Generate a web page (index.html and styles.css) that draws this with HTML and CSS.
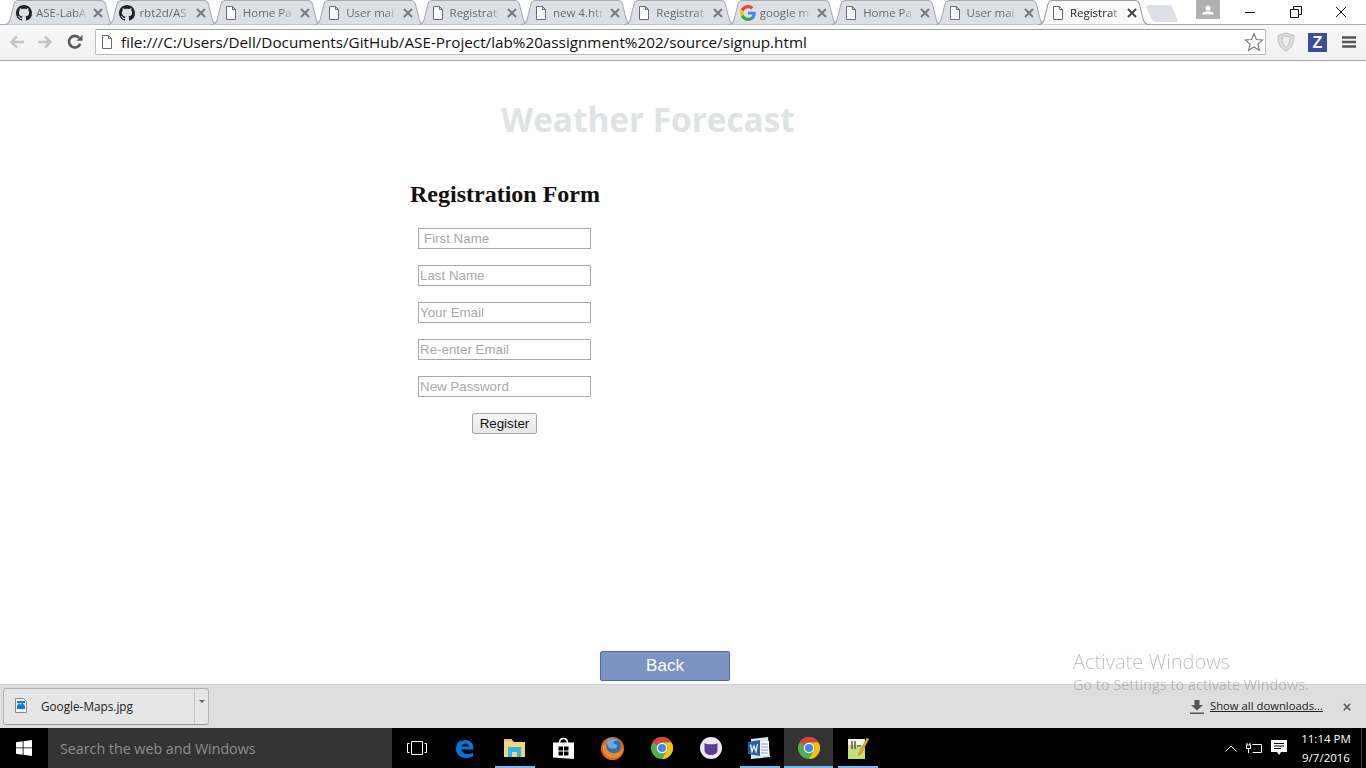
FILE: index.html
```html
<!DOCTYPE html>
<html lang="en">
<head>
<meta charset="utf-8">
<title>Registration</title>
<link rel="stylesheet" href="styles.css">
</head>
<body>
<svg class="defs" width="0" height="0" aria-hidden="true">
  <symbol id="tabshape" viewBox="0 0 111 25" preserveAspectRatio="none">
    <path d="M0.5 24.5C4 24.5 5 23 6 20L10 4C10.7 1.7 12 .5 14.5 .5H96.5C99 .5 100.3 1.7 101 4L105 20C106 23 107 24.5 110.5 24.5"/>
  </symbol>
  <symbol id="cross" viewBox="0 0 10 10"><path d="M1 1L9 9M9 1L1 9" fill="none" stroke="currentColor" stroke-width="2"/></symbol>
  <symbol id="github" viewBox="0 0 16 16"><path d="M8 0C3.58 0 0 3.58 0 8c0 3.54 2.29 6.53 5.47 7.59.4.07.55-.17.55-.38 0-.19-.01-.82-.01-1.49-2.01.37-2.53-.49-2.69-.94-.09-.23-.48-.94-.82-1.13-.28-.15-.68-.52-.01-.53.63-.01 1.08.58 1.23.82.72 1.21 1.87.87 2.33.66.07-.52.28-.87.51-1.07-1.78-.2-3.64-.89-3.64-3.95 0-.87.31-1.59.82-2.15-.08-.2-.36-1.02.08-2.12 0 0 .67-.21 2.2.82.64-.18 1.32-.27 2-.27.68 0 1.36.09 2 .27 1.53-1.04 2.2-.82 2.2-.82.44 1.1.16 1.92.08 2.12.51.56.82 1.27.82 2.15 0 3.07-1.87 3.75-3.65 3.95.29.25.54.73.54 1.48 0 1.07-.01 1.93-.01 2.2 0 .21.15.46.55.38A8.013 8.013 0 0016 8c0-4.42-3.58-8-8-8z"/></symbol>
  <symbol id="doc" viewBox="0 0 16 16"><path d="M3.500 1.500H9.500L12.500 4.500V14.500H3.500ZM9.500 1.500V4.500H12.500" fill="#fff" stroke="#6b6b6b" stroke-width="1"/></symbol>
  <symbol id="gee" viewBox="0 0 16 16">
    <path d="M15.700 8.200c0-.6-.05-1-.15-1.500H8v2.900h4.400c-.1.8-.6 1.900-1.700 2.700l2.600 2c1.600-1.400 2.400-3.600 2.400-6.100z" fill="#4285f4"/>
    <path d="M8 16c2.200 0 4-.7 5.300-2l-2.600-2c-.7.5-1.600.8-2.700.8-2.100 0-3.900-1.400-4.500-3.300L.8 11.500C2.100 14.200 4.800 16 8 16z" fill="#34a853"/>
    <path d="M3.500 9.500C3.300 9 3.200 8.500 3.200 8s.1-1 .3-1.500L.8 4.500C.3 5.500 0 6.700 0 8s.3 2.500.8 3.500z" fill="#fbbc05"/>
    <path d="M8 3.200c1.500 0 2.500.6 3.100 1.200l2.300-2.300C12 .8 10.200 0 8 0 4.800 0 2.100 1.800.8 4.500l2.700 2C4.100 4.600 5.900 3.200 8 3.200z" fill="#ea4335"/>
  </symbol>
  <symbol id="chrome" viewBox="0 0 22 22">
    <circle cx="11" cy="11" r="11" fill="#4caf50"/>
    <path d="M11 0A11 11 0 0 1 20.530 5.500H11A5.500 5.500 0 0 0 6.200 8.300L1.500 5.400A11 11 0 0 1 11 0Z" fill="#db4437"/>
    <path d="M20.530 5.500A11 11 0 0 1 11 22L15.800 13.700A5.500 5.500 0 0 0 15.800 8.300 5.500 5.500 0 0 0 11 5.500Z" fill="#f4c20d"/>
    <circle cx="11" cy="11" r="5.200" fill="#fff"/>
    <circle cx="11" cy="11" r="4.100" fill="#4a86e8"/>
  </symbol>
</svg>

<div class="strip">
  <div class="tabs">
    <div class="tab"><svg class="shape"><use href="#tabshape"/></svg><svg class="favicon"><use href="#github"/></svg><span class="title">ASE-LabA</span><svg class="x"><use href="#cross"/></svg></div>
    <div class="tab"><svg class="shape"><use href="#tabshape"/></svg><svg class="favicon"><use href="#github"/></svg><span class="title">rbt2d/AS</span><svg class="x"><use href="#cross"/></svg></div>
    <div class="tab"><svg class="shape"><use href="#tabshape"/></svg><svg class="favicon"><use href="#doc"/></svg><span class="title">Home Pa</span><svg class="x"><use href="#cross"/></svg></div>
    <div class="tab"><svg class="shape"><use href="#tabshape"/></svg><svg class="favicon"><use href="#doc"/></svg><span class="title">User mai</span><svg class="x"><use href="#cross"/></svg></div>
    <div class="tab"><svg class="shape"><use href="#tabshape"/></svg><svg class="favicon"><use href="#doc"/></svg><span class="title">Registrat</span><svg class="x"><use href="#cross"/></svg></div>
    <div class="tab"><svg class="shape"><use href="#tabshape"/></svg><svg class="favicon"><use href="#doc"/></svg><span class="title">new 4.htr</span><svg class="x"><use href="#cross"/></svg></div>
    <div class="tab"><svg class="shape"><use href="#tabshape"/></svg><svg class="favicon"><use href="#doc"/></svg><span class="title">Registrat</span><svg class="x"><use href="#cross"/></svg></div>
    <div class="tab"><svg class="shape"><use href="#tabshape"/></svg><svg class="favicon"><use href="#gee"/></svg><span class="title">google m</span><svg class="x"><use href="#cross"/></svg></div>
    <div class="tab"><svg class="shape"><use href="#tabshape"/></svg><svg class="favicon"><use href="#doc"/></svg><span class="title">Home Pa</span><svg class="x"><use href="#cross"/></svg></div>
    <div class="tab"><svg class="shape"><use href="#tabshape"/></svg><svg class="favicon"><use href="#doc"/></svg><span class="title">User mai</span><svg class="x"><use href="#cross"/></svg></div>
    <div class="tab active"><svg class="shape"><use href="#tabshape"/></svg><svg class="favicon"><use href="#doc"/></svg><span class="title">Registrat</span><svg class="x"><use href="#cross"/></svg></div>
    <div class="newtab"></div>
  </div>
  <div class="winbar">
    <div class="avatar"><svg width="12" height="10" viewBox="0 0 14 12"><circle cx="7" cy="3.500" r="3" fill="#fff"/><path d="M0 11.500C0 8.500 3.500 7.500 7 7.500S14 8.500 14 11.500Z" fill="#fff"/></svg></div>
    <div class="winbtn"><svg width="12" height="12" viewBox="0 0 12 12"><path d="M1 6.500H11" stroke="#111" fill="none"/></svg></div>
    <div class="winbtn"><svg width="12" height="12" viewBox="0 0 12 12"><path d="M.5 3.500H8.500V11.500H.5ZM3.500 3.500V.5H11.500V8.500H8.500" stroke="#111" fill="none"/></svg></div>
    <div class="winbtn"><svg width="12" height="12" viewBox="0 0 12 12"><path d="M1 1L11 11M11 1L1 11" stroke="#111" fill="none"/></svg></div>
  </div>
</div>

<div class="toolbar">
  <svg class="navicon" width="16" height="14" viewBox="0 0 16 14"><path d="M8 1.500L2.500 7L8 12.500M3 7H15" fill="none" stroke="#c4c4c4" stroke-width="2.600"/></svg>
  <svg class="navicon" width="16" height="14" viewBox="0 0 16 14"><path d="M8 1.500L13.500 7L8 12.500M13 7H1" fill="none" stroke="#c4c4c4" stroke-width="2.600"/></svg>
  <svg class="navicon" width="16" height="16" viewBox="0 0 16 16"><path d="M13.200 9.800A5.800 5.800 0 1 1 12.300 4" fill="none" stroke="#5a5a5a" stroke-width="2.600"/><path d="M9.500 6.700H15.500V.7Z" fill="#5a5a5a"/></svg>
  <div class="omnibox">
    <svg class="omni-doc"><use href="#doc"/></svg>
    <span class="url">file:///C:/Users/Dell/Documents/GitHub/ASE-Project/lab%20assignment%202/source/signup.html</span>
    <svg class="star" width="20" height="20" viewBox="0 0 20 20"><path d="M10 1.800L12.400 7.500L18.600 8L13.900 12.100L15.300 18.200L10 15L4.700 18.200L6.100 12.100L1.400 8L7.600 7.500Z" fill="#fff" stroke="#7b7b7b" stroke-width="1.200"/></svg>
  </div>
  <div class="extensions">
    <svg width="18" height="20" viewBox="0 0 18 20"><path d="M9 1L17 3.500C17 11 15 16 9 19C3 16 1 11 1 3.500Z" fill="#dcdcdc" stroke="#c0c0c0"/><path d="M5 5L9 4L13 5C13 10 12 13 9 15.500C6 13 5 10 5 5Z" fill="#eee" stroke="#c4c4c4"/></svg>
    <span class="zbadge">Z</span>
    <svg width="14" height="12" viewBox="0 0 14 12"><path d="M0 1.500H14M0 6H14M0 10.500H14" stroke="#555" stroke-width="2.400"/></svg>
  </div>
</div>

<main class="page">
  <h2 class="brand">Weather Forecast</h2>
  <form class="form">
    <h1 class="form-title">Registration Form</h1>
    <input class="field first" type="text" placeholder="First Name">
    <input class="field" type="text" placeholder="Last Name">
    <input class="field" type="text" placeholder="Your Email">
    <input class="field" type="text" placeholder="Re-enter Email">
    <input class="field" type="text" placeholder="New Password">
    <button class="register" type="button">Register</button>
  </form>
  <button class="back" type="button">Back</button>
</main>

<div class="downloads">
  <div class="dl-item">
    <div class="dl-main">
      <svg width="12" height="15" viewBox="0 0 12 15"><path d="M.5 .5H8.500L11.500 3.500V14.500H.5Z" fill="#f4f4f4" stroke="#8a8a8a"/><path d="M2 3H10V11H2Z" fill="#1479d4"/><path d="M2 8L4 5L5.500 7L7 4.500L10 8V5H2Z" fill="#cfe6fa"/></svg>
      <span class="dl-name">Google-Maps.jpg</span>
    </div>
    <div class="dl-more"><span class="caret"></span></div>
  </div>
  <div class="dl-right">
    <svg width="14" height="14" viewBox="0 0 14 14"><path d="M4.500 0H9.500V5H13L7 10.500L1 5H4.500ZM0 12.500H14V14H0Z" fill="#555"/></svg>
    <a class="show-all">Show all downloads...</a>
    <svg class="dl-close"><use href="#cross"/></svg>
  </div>
</div>

<div class="taskbar">
  <div class="start"><svg width="16" height="16" viewBox="0 0 16 16"><path d="M0 2.300L6.700 1.300V7.500H0ZM7.500 1.200L16 0V7.500H7.500ZM0 8.300H6.700V14.700L0 13.700ZM7.500 8.300H16V16L7.500 14.800Z" fill="#fff"/></svg></div>
  <div class="search">Search the web and Windows</div>
  <div class="task"><svg width="20" height="14" viewBox="0 0 20 14"><path d="M4.500 .5H15.500V13.500H4.500ZM2.500 2.500H.5V11.500H2.500M17.500 2.500H19.500V11.500H17.500" fill="none" stroke="#fff"/></svg></div>
  <div class="task"><svg width="21" height="22" viewBox="0 0 21 22"><path d="M3 10.500C3 5 7 3 11 3C15.500 3 18.500 6.500 18.500 12.500H6.500C7 17.500 13.500 18.500 18 15.500V19.500C12 22.500 1 21 1 12C1 6 6 1.500 11 .5C6 2 3.500 6 3 10.500ZM6.500 9.500H13.800C13.700 5.500 7.500 5.500 6.500 9.500Z" fill="#0078d7"/></svg></div>
  <div class="task open"><svg width="22" height="20" viewBox="0 0 22 20"><path d="M0 2H8L10 4H21V19H0Z" fill="#f2d57a"/><path d="M0 1H8V3H0Z" fill="#e6c25c"/><path d="M4 9H17V19H13V14H8V19H4Z" fill="#2fb5e8"/></svg></div>
  <div class="task"><svg width="21" height="24" viewBox="0 0 21 24"><path d="M0 6.500H21V23L0 21.500Z" fill="#fff"/><path d="M6.500 7C6.500 1 14.500 1 14.500 7" fill="none" stroke="#fff" stroke-width="1.500"/><path d="M5.500 10.500H10V14.500H5.500ZM11 10.500H15.500V14.500H11ZM5.500 15.500H10V19.500H5.500ZM11 15.500H15.500V19.500H11Z" fill="#000"/></svg></div>
  <div class="task"><svg width="23" height="23" viewBox="0 0 23 23"><circle cx="11.500" cy="11.500" r="11.500" fill="#e2681c"/><circle cx="12.500" cy="9" r="7.500" fill="#2f6fb5"/><path d="M6 3C9 1 15 1 18 4C13 3 12 5 13 7C16 7 17 9 15 11C11 13 7 11 6 7Z" fill="#6fa9d8"/><path d="M2 8C1 14 5 21 12 21C18 21 22 16 22 11C20 15 16 17 11 16C7 15 5 12 5 8C3.500 8 3 8 2 8Z" fill="#f08a24"/></svg></div>
  <div class="task"><svg width="22" height="22"><use href="#chrome"/></svg></div>
  <div class="task"><svg width="22" height="22" viewBox="0 0 22 22"><circle cx="11" cy="11" r="11" fill="#ece9f4"/><path d="M4.500 6C6 7 7 7.300 8 7.300H14C15 7.300 16 7 17.500 6V13C17.500 16.500 14.500 18 11 18S4.500 16.500 4.500 13Z" fill="#5e3d94"/></svg></div>
  <div class="task open"><svg width="23" height="22" viewBox="0 0 23 22"><path d="M3 2L20 0L22 20L3 22Z" fill="#dbe4f2"/><path d="M7 4H21V18H7Z" fill="#f7f9fc"/><path d="M0 5L12 3V19L0 17Z" fill="#2a5da8"/><path d="M2.500 7.500L4 14.500L6 9L8 14.500L9.500 7" fill="none" stroke="#fff" stroke-width="1.200"/><path d="M13 7H20M13 10H20M13 13H20M13 16H20" stroke="#7a9cd0"/></svg></div>
  <div class="task open current"><svg width="22" height="22"><use href="#chrome"/></svg></div>
  <div class="task open"><svg width="24" height="24" viewBox="0 0 24 24"><path d="M2 3H19V23H2Z" fill="#c5de7e"/><path d="M2 3H19V9H2Z" fill="#f2f6e4"/><path d="M6 5V13M9 5V13" stroke="#444" stroke-width="1.300"/><path d="M11 10H15" stroke="#444"/><path d="M13 17L21 2L23 3L15 18L12.500 19.500Z" fill="#eeb022" stroke="#9a6a10" stroke-width=".5"/></svg></div>
  <div class="tray">
    <svg width="12" height="7" viewBox="0 0 12 7"><path d="M.5 6.500L6 1L11.500 6.500" fill="none" stroke="#fff"/></svg>
    <svg width="16" height="12" viewBox="0 0 16 12"><path d="M6.500 2.500H15.500V10.500H6.500M1 1V3M4 1V3M.5 3H4.500V6.500H.5ZM2.500 6.500V11" fill="none" stroke="#fff"/></svg>
    <svg width="16" height="16" viewBox="0 0 16 16"><path d="M0 0H16V12H10L8 15L6 12H0Z" fill="#fff"/><path d="M3 3.500H13M3 6H13M3 8.500H10" stroke="#000"/></svg>
    <div class="clock"><span>11:14 PM</span><span>9/7/2016</span></div>
    <span class="peek"></span>
  </div>
</div>

<div class="activate">
  <div class="activate-head">Activate Windows</div>
  <div class="activate-sub">Go to Settings to activate Windows.</div>
</div>
</body>
</html>
```
FILE: styles.css
```css
* { box-sizing: border-box; }
html, body { margin: 0; height: 100%; }
body {
  position: relative;
  width: 1366px;
  height: 768px;
  overflow: hidden;
  display: flex;
  flex-direction: column;
  background: #fff;
  font-family: "Open Sans", "Liberation Sans", sans-serif;
}
.defs { position: absolute; }

/* Tab strip */
.strip {
  height: 25px;
  flex: none;
  display: flex;
  position: relative;
}
.strip::after {
  content: "";
  position: absolute;
  left: 0;
  right: 0;
  bottom: 0;
  height: 1px;
  background: #a9a9a9;
}
.tabs { display: flex; flex: none; padding-left: 4px; }
.tab {
  position: relative;
  flex: none;
  width: 111.400px;
  height: 25px;
  margin-right: -8px;
  display: flex;
  align-items: center;
  padding: 0 12px;
  z-index: 1;
}
.tab.active { z-index: 3; }
.shape {
  position: absolute;
  inset: 0;
  width: 100%;
  height: 100%;
  fill: #dce0e6;
  stroke: #a8a9ab;
  stroke-width: 1;
}
.tab.active .shape { fill: #fafafa; stroke: #9a9a9a; }
.favicon { position: relative; width: 16px; height: 16px; flex: none; fill: #222; }
.title {
  position: relative;
  flex: none;
  width: 52px;
  margin-left: 4px;
  font-size: 11.500px;
  line-height: 16px;
  color: #666a70;
  white-space: nowrap;
  overflow: hidden;
  -webkit-mask-image: linear-gradient(to right, #000 76%, transparent);
  mask-image: linear-gradient(to right, #000 76%, transparent);
}
.tab.active .title { color: #222; }
.x {
  position: relative;
  flex: none;
  margin-left: 5px;
  width: 10px;
  height: 10px;
  color: #77797c;
}
.tab.active .x { color: #444; }
.newtab {
  flex: none;
  width: 26px;
  height: 17px;
  margin: 5px 0 0 8px;
  background: #dce0e6;
  border-radius: 3px;
  transform: skewX(22deg);
}
.winbar {
  display: flex;
  align-items: flex-start;
  margin-left: auto;
  padding-right: 2px;
  position: relative;
  z-index: 4;
}
.avatar {
  width: 24px;
  height: 19px;
  background: #b0b0b0;
  margin-right: 8px;
  display: flex;
  align-items: center;
  justify-content: center;
}
.winbtn {
  width: 45.500px;
  height: 24px;
  display: flex;
  align-items: center;
  justify-content: center;
}

/* Toolbar */
.toolbar {
  height: 36px;
  flex: none;
  display: flex;
  align-items: center;
  background: linear-gradient(#f8f8f8, #f1f1f1);
  border-bottom: 1px solid #a6a6a6;
  padding: 0 9px 1px 9px;
  gap: 12px;
}
.navicon { flex: none; }
.toolbar .navicon:nth-child(3) { margin-left: 2px; }
.omnibox {
  width: 1171px;
  height: 26px;
  flex: none;
  display: flex;
  align-items: center;
  background: #fff;
  border: 1px solid #bdbdbd;
  border-top-color: #a0a0a0;
  border-radius: 2px;
  padding: 0 1px 0 3px;
}
.omni-doc { width: 16px; height: 16px; flex: none; }
.url {
  flex: 1;
  margin-left: 6px;
  font-size: 15.250px;
  line-height: 20px;
  color: #111;
  white-space: nowrap;
}
.star { flex: none; }
.extensions {
  display: flex;
  align-items: center;
  gap: 13px;
  margin-left: -1px;
}
.zbadge {
  width: 19px;
  height: 19px;
  background: #3c4d9c;
  color: #fff;
  font: bold 16px/19px "Liberation Sans", sans-serif;
  text-align: center;
}
.extensions svg:last-child { margin-left: 2px; }

/* Page */
.page {
  flex: 1;
  min-height: 0;
  position: relative;
  background: #fff;
}
.brand {
  margin: 0;
  padding: 37px 0 0 501px;
  font-size: 33.300px;
  line-height: 42px;
  font-weight: 700;
  color: #dfe3e3;
}
.form {
  margin: 40px 0 0 410px;
  display: flex;
  flex-direction: column;
  align-items: flex-start;
  font-family: "Liberation Sans", sans-serif;
}
.form-title {
  margin: 0 0 20px;
  font: bold 24px/28px "Liberation Serif", serif;
  color: #111;
  white-space: nowrap;
}
.field {
  width: 173px;
  height: 21px;
  margin: 0 0 16px 8px;
  padding: 0 1px;
  border: 1px solid #a9a9a9;
  border-radius: 0;
  font: 13.330px "Liberation Sans", sans-serif;
  background: #fff;
  outline: none;
}
.field.first { padding-left: 5px; }
.field::placeholder { color: #a9a9a9; opacity: 1; }
.register {
  width: 65px;
  height: 21px;
  margin-left: 62px;
  padding: 0;
  border: 1px solid #a6a6a6;
  border-radius: 2px;
  background: linear-gradient(#f6f6f6, #e6e6e6);
  font: 13.330px "Liberation Sans", sans-serif;
  color: #111;
}
.back {
  display: block;
  width: 130px;
  height: 30px;
  margin: 217px 0 0 600px;
  padding: 0;
  border: 1px solid #506a9f;
  border-radius: 2px;
  background: #7b94c3;
  color: #fff;
  font: 17px "Liberation Sans", sans-serif;
}

/* Download shelf */
.downloads {
  height: 44px;
  flex: none;
  display: flex;
  align-items: center;
  justify-content: space-between;
  background: #dedede;
  border-top: 1px solid #d2d2d2;
  padding: 0 15px 0 3px;
}
.dl-item {
  width: 206px;
  height: 37px;
  display: flex;
  background: #e6e6e6;
  border: 1px solid #b3b3b3;
  border-bottom-color: #9a9a9a;
  border-radius: 3px;
}
.dl-main {
  flex: 1;
  display: flex;
  align-items: center;
  padding: 0 0 2px 11px;
  gap: 14px;
}
.dl-name { font-size: 11.750px; color: #222; }
.dl-more {
  width: 14px;
  border-left: 1px solid #c4c4c4;
  display: flex;
  justify-content: center;
  padding-top: 11px;
}
.caret {
  width: 0;
  height: 0;
  border-left: 3px solid transparent;
  border-right: 3px solid transparent;
  border-top: 3px solid #666;
}
.dl-right { display: flex; align-items: center; }
.show-all {
  margin-left: 6px;
  margin-bottom: 2px;
  font-size: 11.300px;
  color: #222;
  text-decoration: underline;
}
.dl-close {
  width: 8px;
  height: 8px;
  margin-left: 20px;
  color: #555;
}

/* Taskbar */
.taskbar {
  height: 40px;
  flex: none;
  display: flex;
  background: #000;
}
.start {
  width: 48px;
  display: flex;
  align-items: center;
  justify-content: center;
}
.search {
  width: 344px;
  padding: 1px 0 0 12px;
  background: #333;
  color: #8f8f8f;
  font-size: 14.250px;
  line-height: 39px;
}
.task {
  width: 49px;
  height: 40px;
  flex: none;
  position: relative;
  display: flex;
  align-items: center;
  justify-content: center;
}
.task.open::after {
  content: "";
  position: absolute;
  left: 5px;
  right: 4px;
  bottom: 0;
  height: 2px;
  background: #76b9ed;
}
.task.current { background: #333; }
.task.current::after { left: 0; right: 0; }
.tray {
  flex: 1;
  display: flex;
  align-items: center;
  justify-content: flex-end;
  gap: 9px;
  padding-right: 4px;
  color: #fff;
}
.clock {
  width: 66px;
  margin-left: -3px;
  margin-right: -7px;
  display: flex;
  flex-direction: column;
  align-items: center;
  font-size: 11.500px;
  line-height: 19px;
}
.peek { width: 1px; height: 40px; background: #444; }

/* Activation watermark */
.activate {
  position: absolute;
  left: 1073px;
  top: 649px;
  color: #9b9b9b;
  opacity: .6;
  pointer-events: none;
  white-space: nowrap;
}
.activate-head { font-size: 20px; line-height: 26px; font-weight: 300; }
.activate-sub { font-size: 14.400px; line-height: 20px; }
```
